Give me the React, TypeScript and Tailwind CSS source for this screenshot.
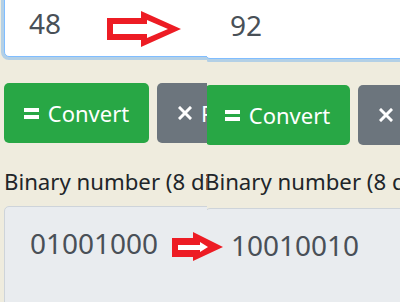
import React from 'react';

const font = { fontFamily: '"Noto Sans", "Open Sans", sans-serif' };

interface PanelProps {
    decimal: string;
    binary: string;
    className?: string;
    labelClass?: string;
}

const EqualIcon = () => (
    <svg width="15" height="11" viewBox="0 0 15 11" className="shrink-0">
        <rect x="0" y="0" width="15" height="4" fill="currentColor" />
        <rect x="0" y="7" width="15" height="4" fill="currentColor" />
    </svg>
);

const TimesIcon = () => (
    <svg width="14" height="14" viewBox="0 0 14 14" className="shrink-0">
        <path d="M2 2 L12 12 M12 2 L2 12" stroke="currentColor" strokeWidth="3" strokeLinecap="square" />
    </svg>
);

const Panel: React.FC<PanelProps> = ({ decimal, binary, className, labelClass }) => (
    <div className={`w-[430px] pl-[4px] flex flex-col ${className ?? ''}`}>
        <div className="h-[69px] rounded-[5px] border border-[#80bdff] bg-white shadow-[0_0_0_3px_rgba(0,123,255,0.25)] flex items-center pl-[24px] text-[28px] leading-[40px] text-[#495057]">
            {decimal}
        </div>
        <div className="mt-[26px] flex gap-[8px]">
            <button className="h-[60px] w-[145px] rounded-[5px] bg-[#28a745] text-white text-[22px] flex items-center justify-center gap-[9px]">
                <EqualIcon /> Convert
            </button>
            <button className="h-[60px] pl-[21px] pr-[20px] rounded-[5px] bg-[#6c757d] text-white text-[22px] flex items-center gap-[9px]">
                <TimesIcon /> Reset
            </button>
        </div>
        <div className={`text-[22.2px] leading-[28px] text-[#212529] whitespace-nowrap ${labelClass ?? 'mt-[25px]'}`}>
            Binary number (8 digits)
        </div>
        <div className="mt-[10px] h-[120px] rounded-[5px] border border-[#ced4da] bg-[#e9ecef] pl-[25px] pt-[16px] text-[28px] leading-[40px] text-[#495057]">
            {binary}
        </div>
    </div>
);

export default function App() {
    return (
        <div className="relative flex h-[302px] w-[400px] overflow-hidden bg-[#efecde]" style={font}>
            <div className="w-[207px] shrink-0 overflow-hidden">
                <Panel decimal="48" binary="01001000" className="-mt-[12px]" />
            </div>
            <div className="flex-1 overflow-hidden">
                <Panel
                    decimal="92"
                    binary="10010010"
                    className="-ml-[6px] -mt-[10px]"
                    labelClass="mt-[23px] mb-[2px]"
                />
            </div>

            <svg className="absolute left-0 top-0 pointer-events-none" width="400" height="302">
                <polygon points="107,18 141,18 141,11 181,29 141,47 141,40 107,40" fill="#ed1c24" />
                <polygon points="113,24 147,24 147,20 168,29 147,38 147,34 113,34" fill="#ffffff" />
                <polygon points="172,238 193,238 193,232 223,247 193,261 193,257 172,257" fill="#ed1c24" />
                <polygon points="178,245 200,245 200,242 208,247 200,252 200,250 178,250" fill="#ffffff" />
            </svg>
        </div>
    );
}
